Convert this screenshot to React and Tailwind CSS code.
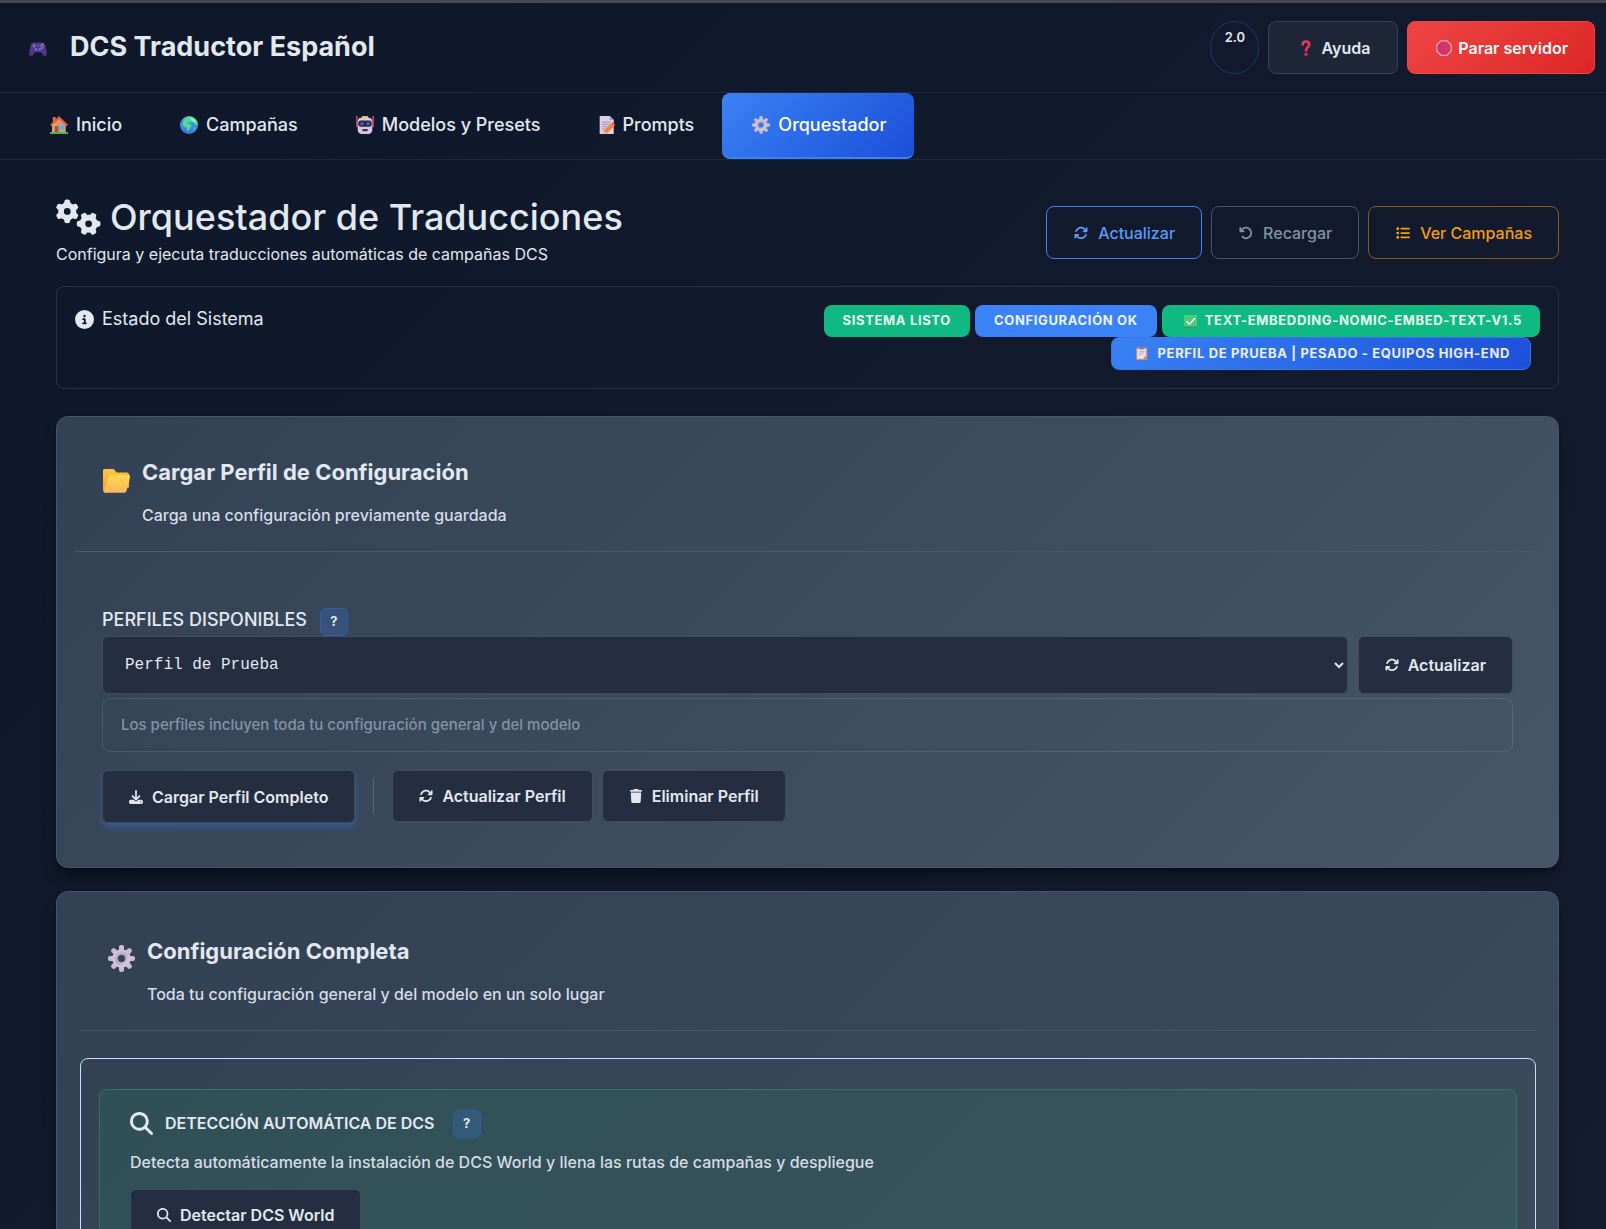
import React from "react";
import {
  FaGears,
  FaArrowsRotate,
  FaArrowRotateLeft,
  FaList,
  FaCircleInfo,
  FaDownload,
  FaTrash,
  FaMagnifyingGlass,
} from "react-icons/fa6";

const TEETH = [0, 45, 90, 135, 180, 225, 270, 315];

function GearIcon({ className, id }) {
  return (
    <svg viewBox="0 0 32 32" className={className} aria-hidden="true">
      <defs>
        <linearGradient id={id} x1="0" y1="0" x2="1" y2="1">
          <stop offset="0" stopColor="#c9bad6" />
          <stop offset="0.5" stopColor="#b9a9c6" />
          <stop offset="1" stopColor="#d9c8ea" />
        </linearGradient>
      </defs>
      {TEETH.map((a) => (
        <rect key={a} x="13" y="0" width="6" height="9" rx="2.500" fill="#cbbcd9" transform={`rotate(${a} 16 16)`} />
      ))}
      <circle cx="16" cy="16" r="8" fill="none" stroke="#cfc2dc" strokeWidth="6" />
      <circle cx="16" cy="16" r="6.500" fill="none" stroke={`url(#${id})`} strokeWidth="4" />
      <circle cx="16" cy="16" r="4.600" fill="none" stroke="#8d8099" strokeWidth="1" />
    </svg>
  );
}

function GamepadIcon({ className }) {
  return (
    <svg viewBox="0 0 32 25" className={className} aria-hidden="true">
      <defs>
        <linearGradient id="pad" x1="0" y1="0" x2="0" y2="1">
          <stop offset="0" stopColor="#4d3a8c" />
          <stop offset="1" stopColor="#5f2f86" />
        </linearGradient>
      </defs>
      <path
        d="M8 1h16c3 0 4.500 2 5 4.500l2.600 13C32.500 22.500 30.500 25 28 25c-2.600 0-3.500-2-4.800-4.500C22.500 19 21.500 18 20 18h-8c-1.500 0-2.500 1-3.200 2.500C7.500 23 6.600 25 4 25c-2.500 0-4.500-2.500-3.600-6.500L3 5.500C3.500 3 5 1 8 1z"
        fill="url(#pad)"
      />
      <circle cx="9" cy="7" r="2.600" fill="#7a6fc4" />
      <circle cx="12.500" cy="13" r="2.200" fill="#6a74d8" />
      <circle cx="19.500" cy="13" r="2.200" fill="#6a74d8" />
      <circle cx="23.500" cy="4.500" r="1.500" fill="#f2b53c" />
      <circle cx="26" cy="7.500" r="1.500" fill="#e8467c" />
      <circle cx="21" cy="7.500" r="1.500" fill="#3c9cf2" />
      <circle cx="23.500" cy="10.500" r="1.500" fill="#3bd07f" />
      <circle cx="16" cy="6" r="1.200" fill="#9d92d8" />
    </svg>
  );
}

function HouseIcon({ className }) {
  return (
    <svg viewBox="0 0 32 32" className={className} aria-hidden="true">
      <rect x="5" y="2" width="5" height="12" fill="#c9875f" />
      <path d="M4 15L16 4l12 11v15H4z" fill="#d99a6b" />
      <path d="M4 15L10 9v21H4z" fill="#e5ac7b" />
      <path d="M16 0L32 15.500l-2.500 2.500L16 5.500 2.500 18 0 15.500z" fill="#f0563c" />
      <rect x="8" y="18" width="7" height="12" fill="#9a5a3c" />
      <rect x="18" y="16" width="8" height="8" fill="#4fb4f5" />
      <path d="M0 28.500h32V32H0z" fill="#43b55a" />
    </svg>
  );
}

function GlobeIcon({ className }) {
  return (
    <svg viewBox="0 0 32 32" className={className} aria-hidden="true">
      <defs>
        <linearGradient id="sea" x1="0" y1="0" x2="0" y2="1">
          <stop offset="0" stopColor="#3ba0ee" />
          <stop offset="1" stopColor="#3f78dd" />
        </linearGradient>
      </defs>
      <circle cx="16" cy="16" r="16" fill="url(#sea)" />
      <path d="M7 6c3-3 6-5 9-5 8 0 14 5 15.500 12 .5 3-1 5-2.500 3.500S26 14 25 13s-2-3-4-3-3 1-5 1-3 1-2 2 5 1 6 3-1 5-3 7-1 5-3 4-1-4-2-6-4-1-6-3-1-7 1-12z" fill="#56d98c" />
      <path d="M17 2c5 0 11 4 12 9-3 1-6 0-7-2s-4-3-5-7z" fill="#86f2b4" />
      <path d="M25 20c1.500-1 2.500 0 2 2s-2 3-2.500 2 0-3 .5-4z" fill="#4ed487" />
    </svg>
  );
}

function RobotIcon({ className }) {
  return (
    <svg viewBox="0 0 32 32" className={className} aria-hidden="true">
      <path d="M1.500 0v14M30.500 0v14" stroke="#e8447c" strokeWidth="2.500" />
      <rect x="0" y="10" width="4" height="10" rx="2" fill="#c72f63" />
      <rect x="28" y="10" width="4" height="10" rx="2" fill="#c72f63" />
      <rect x="10" y="0" width="12" height="5" rx="2" fill="#f6b53d" />
      <path d="M9 3h14c4 0 6 3 6 7v14c0 5-3 8-7 8H10c-4 0-7-3-7-8V10c0-4 2-7 6-7z" fill="#d8c6ea" />
      <rect x="4" y="8" width="24" height="11" rx="4.500" fill="#2f2c48" />
      <rect x="8" y="11" width="5" height="5" rx="2" fill="#2f7cc4" />
      <rect x="19" y="11" width="5" height="5" rx="2" fill="#2f7cc4" />
      <rect x="11" y="23" width="10" height="4" rx="1.500" fill="#3c3752" />
    </svg>
  );
}

function MemoIcon({ className }) {
  return (
    <svg viewBox="0 0 28 32" className={className} aria-hidden="true">
      <path d="M1 0h18l7 7v25H1z" fill="#dccfe8" />
      <path d="M19 0l7 7h-7z" fill="#a99bb8" />
      <path d="M5 11h16M5 15h15M5 19h10M5 23h6" stroke="#9a8fa8" strokeWidth="1.600" />
      <path d="M22 13l5 5L13 31l-6 1 1-6z" fill="#f4803a" />
      <path d="M22 13l2-2 5 5-2 2z" fill="#f0465c" />
      <path d="M8 26l5 5-6 1z" fill="#f7c79a" />
    </svg>
  );
}

function QuestionIcon({ className }) {
  return (
    <svg viewBox="0 0 20 32" className={className} aria-hidden="true">
      <path
        d="M3.500 9C3.500 5 6.500 3.200 10 3.200S16.500 5.500 16.500 9c0 5-6.500 5.500-6.500 12"
        fill="none"
        stroke="#f0355f"
        strokeWidth="5"
        strokeLinecap="round"
      />
      <circle cx="10" cy="28.500" r="3.300" fill="#e32b4c" />
    </svg>
  );
}

function StopIcon({ className }) {
  return (
    <svg viewBox="0 0 32 32" className={className} aria-hidden="true">
      <defs>
        <linearGradient id="stop" x1="0" y1="0" x2="1" y2="0">
          <stop offset="0" stopColor="#c92f7d" />
          <stop offset="1" stopColor="#e0384c" />
        </linearGradient>
      </defs>
      <path d="M10 1.500h12l8.500 8.500v12L22 30.500H10L1.500 22V10z" fill="url(#stop)" stroke="#d3a9c0" strokeWidth="2.500" />
    </svg>
  );
}

function CheckIcon({ className }) {
  return (
    <svg viewBox="0 0 32 32" className={className} aria-hidden="true">
      <rect width="32" height="32" rx="2" fill="#4fc97c" />
      <path d="M0 28h32v2a2 2 0 0 1-2 2H2a2 2 0 0 1-2-2z" fill="#2f9a6a" />
      <path d="M7 16l6 7L26 9" fill="none" stroke="#fff" strokeWidth="3.500" strokeLinecap="round" strokeLinejoin="round" />
    </svg>
  );
}

function ClipboardIcon({ className }) {
  return (
    <svg viewBox="0 0 28 32" className={className} aria-hidden="true">
      <rect y="1" width="28" height="31" rx="2" fill="#c98d68" />
      <path d="M3 4h22v19l-6 6H3z" fill="#e9dff2" />
      <path d="M19 29v-6h6z" fill="#b5a7c4" />
      <rect x="8" y="0" width="12" height="6" rx="2" fill="#8d8399" />
      <path d="M7 11h14M7 15h14M7 19h9" stroke="#a79bb5" strokeWidth="1.600" />
    </svg>
  );
}

function FolderIcon({ className }) {
  return (
    <svg viewBox="0 0 32 28" className={className} aria-hidden="true">
      <defs>
        <linearGradient id="folderFront" x1="0" y1="0" x2="0" y2="1">
          <stop offset="0" stopColor="#ffd84f" />
          <stop offset="1" stopColor="#fcb65c" />
        </linearGradient>
        <linearGradient id="folderBack" x1="0" y1="0" x2="0" y2="1">
          <stop offset="0" stopColor="#ffc93f" />
          <stop offset="1" stopColor="#f09a3a" />
        </linearGradient>
      </defs>
      <path d="M0 2c0-1 1-2 2-2h9c1 0 1.800.4 2.500 1L16 4h12c1.800 0 3 1 3 3v15L3 28c-2 0-3-1-3-3z" fill="url(#folderBack)" />
      <path d="M10 7h20c1.500 0 2.400 1 2 2.500l-4 16c-.4 1.500-1.500 2.500-3 2.500H3c-1.500 0-2.200-.8-1.800-2.200L6.500 10C7 8 8 7 10 7z" fill="url(#folderFront)" />
    </svg>
  );
}

function HeaderButton({ className, children }) {
  return (
    <button type="button" className={`flex h-[53px] items-center rounded-lg border text-base font-semibold ${className}`}>
      {children}
    </button>
  );
}

function Tab({ icon, active, children }) {
  return (
    <a
      href="#"
      aria-current={active ? "page" : undefined}
      className={`flex h-[66px] items-center gap-2 border-b-2 pr-7 pl-[30px] text-lg font-medium ${
        active
          ? "rounded-lg border-[#3b82f6] bg-linear-135 from-[#3b82f6] to-[#1d4ed8] text-white"
          : "border-transparent"
      }`}
    >
      {icon}
      {children}
    </a>
  );
}

function OutlineButton({ icon: Icon, className, children }) {
  return (
    <button type="button" className={`flex h-[53px] items-center gap-2.5 rounded-lg border pr-[26px] pl-[27px] text-base font-medium ${className}`}>
      <Icon className="size-3.5" />
      {children}
    </button>
  );
}

function DarkButton({ icon: Icon, className = "", children }) {
  return (
    <button
      type="button"
      className={`flex items-center gap-[9px] rounded-md border border-[#3f4c5e] bg-[#242e40] px-[26px] text-base font-semibold ${className}`}
    >
      <Icon className="size-3.5" />
      {children}
    </button>
  );
}

function Badge({ className, children }) {
  return (
    <span className={`flex items-center rounded-lg text-[13px] font-bold tracking-wider text-white/90 uppercase ${className}`}>
      {children}
    </span>
  );
}

function HelpButton({ className = "" }) {
  return (
    <button
      type="button"
      aria-label="Ayuda"
      className={`size-7 shrink-0 rounded-md border border-[#2f5ea6] bg-[#3b82f6]/20 text-[13px] font-bold ${className}`}
    >
      ?
    </button>
  );
}

function SectionHeader({ icon, title, subtitle }) {
  return (
    <div className="flex items-start gap-3 pl-7">
      {icon}
      <div>
        <h2 className="text-[22px] leading-[30px] font-bold">{title}</h2>
        <p className="mt-4 text-base leading-6 font-medium text-[#d5dce6]">{subtitle}</p>
      </div>
    </div>
  );
}

export default function App() {
  return (
    <div
      className="h-screen overflow-hidden border-t-[3px] border-[#47484b] bg-linear-135 from-[#0f172a] to-[#151c2f] text-[#e2e8f0]"
      style={{ fontFamily: 'Inter, "Liberation Sans", sans-serif' }}
    >
      <header className="flex h-[90px] items-start justify-between border-b border-[#1e293b] pt-[18px] pr-[11px] pl-[29px]">
        <div className="flex items-center gap-[23px] pt-2">
          <GamepadIcon className="mt-1 w-[18px]" />
          <h1 className="text-[27px] leading-9 font-bold">DCS Traductor Español</h1>
        </div>
        <div className="flex gap-[9px]">
          <span className="h-[53px] w-[49px] rounded-[50%] border border-[#1d3263] pt-[5px] text-center text-[13px] leading-5 font-semibold">
            2.0
          </span>
          <HeaderButton className="gap-2.5 border-[#334155] bg-[#1e2638] pr-[27px] pl-8">
            <QuestionIcon className="h-4" />
            Ayuda
          </HeaderButton>
          <HeaderButton className="gap-1.5 border-[#ef4444] bg-linear-135 from-[#ef4444] to-[#dc2626] pr-[26px] pl-7 text-white">
            <StopIcon className="size-4" />
            Parar servidor
          </HeaderButton>
        </div>
      </header>

      <nav className="flex border-b border-[#1e293b] pl-5">
        <Tab icon={<HouseIcon className="size-[18px]" />}>Inicio</Tab>
        <Tab icon={<GlobeIcon className="size-[18px]" />}>Campañas</Tab>
        <Tab icon={<RobotIcon className="size-[18px]" />}>Modelos y Presets</Tab>
        <Tab icon={<MemoIcon className="h-[18px] w-4" />}>Prompts</Tab>
        <Tab active icon={<GearIcon id="gearTab" className="size-[18px]" />}>
          Orquestador
        </Tab>
      </nav>

      <main className="pr-[47px] pl-14">
        <div className="flex items-start justify-between pt-[35px]">
          <div>
            <h2 className="flex items-center gap-[9px] text-4xl leading-[44px] font-medium">
              <FaGears className="h-9 w-[45px]" />
              Orquestador de Traducciones
            </h2>
            <p className="mt-[3px] text-base leading-6">Configura y ejecuta traducciones automáticas de campañas DCS</p>
          </div>
          <div className="flex gap-[9px] pt-[11px]">
            <OutlineButton icon={FaArrowsRotate} className="border-[#3b82f6] text-[#5a9bf8]">
              Actualizar
            </OutlineButton>
            <OutlineButton icon={FaArrowRotateLeft} className="border-[#475569] text-[#8592a6]">
              Recargar
            </OutlineButton>
            <OutlineButton icon={FaList} className="border-[#8a5a14] text-[#f59e0b]">
              Ver Campañas
            </OutlineButton>
          </div>
        </div>

        <section className="mt-5 flex items-start justify-between rounded-lg border border-[#273246] p-[18px]">
          <h3 className="flex items-center gap-2 pt-0.5 text-lg leading-6">
            <FaCircleInfo className="size-[19px]" />
            Estado del Sistema
          </h3>
          <div className="flex flex-col items-end">
            <div className="flex gap-[5px]">
              <Badge className="h-8 bg-[#10b981] px-[19px]">Sistema listo</Badge>
              <Badge className="h-8 bg-[#3b82f6] px-[19px]">Configuración OK</Badge>
              <Badge className="h-8 gap-2 bg-[#10b981] pr-[18px] pl-[22px]">
                <CheckIcon className="size-[13px]" />
                text-embedding-nomic-embed-text-v1.5
              </Badge>
            </div>
            <Badge className="mr-[9px] h-[33px] gap-2.5 border border-[#3b76e8] bg-linear-135 from-[#3b82f6] to-[#1d4ed8] pr-5 pl-6">
              <ClipboardIcon className="h-[13px]" />
              Perfil de Prueba | Pesado - Equipos High-End
            </Badge>
          </div>
        </section>

        <section className="mt-[27px] rounded-xl border border-[#475569] bg-linear-135 from-[#334155] to-[#475569] px-[18px] pb-11 shadow-lg shadow-black/40">
          <div className="h-[135px] border-b border-[#4a586b] pt-10">
            <SectionHeader
              icon={<FolderIcon className="mt-3 w-[27px]" />}
              title="Cargar Perfil de Configuración"
              subtitle="Carga una configuración previamente guardada"
            />
          </div>
          <div className="px-[27px] pt-14">
            <div className="flex items-start gap-[13px]">
              <label htmlFor="perfil" className="text-lg leading-6 font-medium">
                PERFILES DISPONIBLES
              </label>
              <HelpButton />
            </div>
            <div className="flex gap-2.5">
              <select
                id="perfil"
                className="h-[58px] min-w-0 flex-1 rounded-md border border-[#3f4c5e] bg-[#242e40] px-[18px] text-base"
                style={{ fontFamily: '"Liberation Mono", monospace' }}
              >
                <option>Perfil de Prueba</option>
              </select>
              <DarkButton icon={FaArrowsRotate} className="h-[58px]">
                Actualizar
              </DarkButton>
            </div>
            <p className="mt-1 flex h-[54px] items-center rounded-lg border border-white/10 px-[18px] text-[15px] font-medium text-[#8492a7]">
              Los perfiles incluyen toda tu configuración general y del modelo
            </p>
            <div className="mt-[18px] flex items-start">
              <DarkButton icon={FaDownload} className="h-[53px] shadow-[0_4px_6px_rgba(59,130,246,0.35)]">
                Cargar Perfil Completo
              </DarkButton>
              <div className="mx-[18px] mt-2 h-9 w-px bg-[#56657a]" />
              <DarkButton icon={FaArrowsRotate} className="h-[52px]">
                Actualizar Perfil
              </DarkButton>
              <DarkButton icon={FaTrash} className="ml-[9px] h-[52px]">
                Eliminar Perfil
              </DarkButton>
            </div>
          </div>
        </section>

        <section className="mt-[23px] min-h-[2800px] rounded-xl border border-[#475569] bg-linear-135 from-[#334155] to-[#475569] pr-[22px] pl-[23px] shadow-lg shadow-black/40">
          <div className="h-[139px] border-b border-[#475569] pt-11">
            <SectionHeader
              icon={<GearIcon id="gearSection" className="mt-[9px] w-[27px]" />}
              title="Configuración Completa"
              subtitle="Toda tu configuración general y del modelo en un solo lugar"
            />
          </div>
          <div className="mt-[27px] rounded-lg border border-[#bae6fd] px-[18px] py-[30px]">
            <div className="rounded-lg border border-[#2b7a5c] bg-[#22c55e]/10 px-[30px] pt-5 pb-[30px]">
              <div className="flex items-start gap-3">
                <FaMagnifyingGlass className="mt-0.5 size-[23px]" />
                <h3 className="text-base leading-[26px] font-semibold">DETECCIÓN AUTOMÁTICA DE DCS</h3>
                <HelpButton className="ml-1.5" />
              </div>
              <p className="mt-3 text-base leading-6 font-medium text-[#d5dce6]">
                Detecta automáticamente la instalación de DCS World y llena las rutas de campañas y despliegue
              </p>
              <DarkButton icon={FaMagnifyingGlass} className="mt-[15px] h-[52px]">
                Detectar DCS World
              </DarkButton>
            </div>
          </div>
        </section>
      </main>
    </div>
  );
}
